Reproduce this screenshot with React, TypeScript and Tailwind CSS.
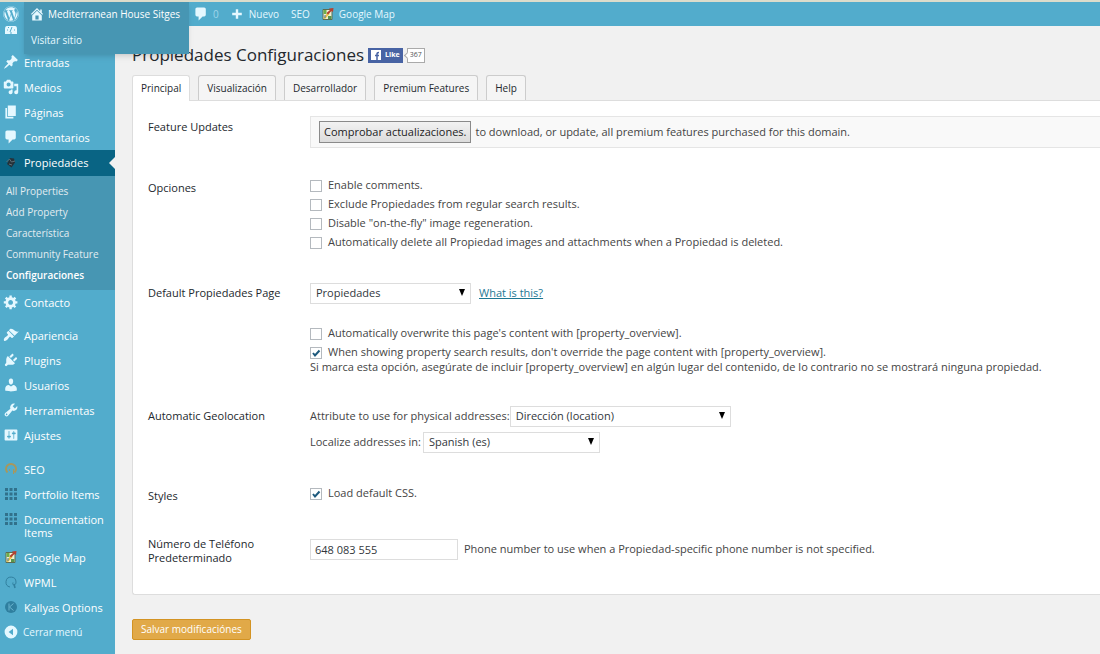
import React, { useState } from "react";
import { FaWordpress } from "react-icons/fa";

const dashicons = {
  pin: "M10.44 3.02l1.82-1.82 6.36 6.35-1.83 1.82c-1.05-.68-2.48-.57-3.41.36l-.75.75c-.92.93-1.04 2.35-.35 3.41l-1.83 1.82-2.41-2.41-2.8 2.79c-.42.42-3.38 2.71-3.8 2.29s1.86-3.39 2.28-3.81l2.79-2.79L4.1 9.36l1.83-1.82c1.05.69 2.48.57 3.4-.36l.75-.75c.93-.92 1.05-2.35.36-3.41z",
  media: "M13 11V4c0-.55-.45-1-1-1h-1.67L9 1H5L3.67 3H2c-.55 0-1 .45-1 1v7c0 .55.45 1 1 1h10c.55 0 1-.45 1-1zM7 4.5c1.38 0 2.5 1.12 2.5 2.5S8.38 9.5 7 9.5 4.5 8.38 4.5 7 5.62 4.5 7 4.5zM14 6h5v10.5c0 1.38-1.12 2.5-2.5 2.5S14 17.88 14 16.5s1.12-2.5 2.5-2.5c.17 0 .34.02.5.05V9h-3V6zm-4 8.05V13h2v3.5c0 1.38-1.12 2.5-2.5 2.5S7 17.88 7 16.5 8.12 14 9.5 14c.17 0 .34.02.5.05z",
  page: "M6 15V2h10v13H6zm-1 1h8v2H3V5h2v11z",
  comments: "M5 2h9c1.1 0 2 .9 2 2v7c0 1.1-.9 2-2 2h-2l-5 5v-5H5c-1.1 0-2-.9-2-2V4c0-1.1.9-2 2-2z",
  gear: "M18 12h-2.18c-.17.7-.44 1.35-.81 1.93l1.54 1.54-2.1 2.1-1.54-1.54c-.58.36-1.23.63-1.91.79V19H8v-2.18c-.68-.16-1.33-.43-1.91-.79l-1.54 1.54-2.12-2.12 1.54-1.54c-.36-.58-.63-1.23-.79-1.91H1V9.03h2.17c.16-.7.44-1.35.8-1.94L2.43 5.55l2.1-2.1 1.54 1.54c.58-.37 1.24-.64 1.93-.81V2h3v2.18c.68.16 1.33.43 1.91.79l1.54-1.54 2.12 2.12-1.54 1.54c.36.59.64 1.24.8 1.94H18V12zm-8.5 1.5c1.66 0 3-1.34 3-3s-1.34-3-3-3-3 1.34-3 3 1.34 3 3 3z",
  appearance: "M14.48 11.06L7.41 3.99l1.5-1.5c.5-.56 2.3-.47 3.51.32 1.21.8 1.43 1.28 2.91 2.1 1.18.64 2.45 1.26 4.45.85zm-.71.71L6.7 4.7 4.93 6.47c-.39.39-.39 1.02 0 1.41l1.06 1.06c.39.39.39 1.03 0 1.42-.6.6-1.43 1.11-2.21 1.69-.35.26-.7.53-1.01.84C1.43 14.23.4 16.08 1.4 17.07c.99 1 2.84-.03 4.18-1.36.31-.31.58-.66.85-1.02.57-.78 1.08-1.61 1.69-2.21.39-.39 1.02-.39 1.41 0l1.06 1.06c.39.39 1.02.39 1.41 0z",
  plugins: "M13.11 4.36L9.87 7.6 8 5.73l3.24-3.24c.35-.34 1.05-.2 1.56.32.52.51.66 1.21.31 1.55zm-8 1.77l.91-1.12 9.01 9.01-1.19.84c-.71.71-2.63 1.16-3.82 1.16H6.14L4.9 17.26c-.59.59-1.54.59-2.12 0-.59-.58-.59-1.53 0-2.12l1.24-1.24v-3.88c0-1.13.4-3.19 1.09-3.89zm7.26 3.97l3.24-3.24c.34-.35 1.04-.21 1.55.31.52.51.66 1.21.31 1.55l-3.24 3.25z",
  users: "M10 9.25c-2.27 0-2.73-3.44-2.73-3.44C7 4.02 7.82 2 9.97 2c2.16 0 2.98 2.02 2.71 3.81 0 0-.41 3.44-2.68 3.44zm0 2.57L12.72 10c2.39 0 4.52 2.33 4.52 4.53v2.49s-3.65 1.13-7.24 1.13c-3.65 0-7.24-1.13-7.24-1.13v-2.49c0-2.25 1.94-4.48 4.47-4.48z",
  tools: "M16.68 9.77c-1.34 1.34-3.3 1.67-4.95.99l-5.41 6.52c-.99.99-2.59.99-3.58 0s-.99-2.59 0-3.57l6.52-5.42c-.68-1.65-.35-3.61.99-4.95 1.28-1.28 3.12-1.62 4.72-1.06l-2.89 2.89 2.82 2.82 2.86-2.87c.53 1.58.18 3.39-1.08 4.65zM3.81 16.21c.4.39 1.04.39 1.43 0 .4-.4.4-1.04 0-1.43-.39-.4-1.03-.4-1.43 0-.39.39-.39 1.03 0 1.43z",
  settings: "M18 16V4c0-.55-.45-1-1-1H3c-.55 0-1 .45-1 1v12c0 .55.45 1 1 1h14c.55 0 1-.45 1-1zM8 11h1c.55 0 1 .45 1 1s-.45 1-1 1H8v1.5c0 .28-.22.5-.5.5s-.5-.22-.5-.5V13H6c-.55 0-1-.45-1-1s.45-1 1-1h1V5.5c0-.28.22-.5.5-.5s.5.22.5.5V11zm5-2h-1c-.55 0-1-.45-1-1s.45-1 1-1h1V5.5c0-.28.22-.5.5-.5s.5.22.5.5V7h1c.55 0 1 .45 1 1s-.45 1-1 1h-1v5.5c0 .28-.22.5-.5.5s-.5-.22-.5-.5V9z",
  home: "M16 8.5l1.53 1.53-1.06 1.06L10 4.6l-6.47 6.49-1.06-1.06L10 2.5l4 4v-2h2v4zm-6-2.46l6 5.99V18H4v-5.97zM12 17v-5H8v5h4z",
  plus: "M8 2h4v6h6v4h-6v6H8v-6H2V8h6z",
  collapse: "M10 2a8 8 0 1 1 0 16 8 8 0 0 1 0-16zM12.500 6L7 10l5.500 4z",
};

const Dashicon = ({ name }: { name: keyof typeof dashicons }) => (
  <svg viewBox="0 0 20 20" className="size-4 shrink-0 fill-[#e5f8ff]" aria-hidden="true">
    <path fillRule="evenodd" d={dashicons[name]} />
  </svg>
);

const GridIcon = () => (
  <svg viewBox="0 0 16 16" className="size-4 shrink-0 fill-[#31718b]" aria-hidden="true">
    {[2, 6.5, 11].map((y) => [2, 6.5, 11].map((x) => <rect key={`${x}-${y}`} x={x} y={y} width="3" height="3" />))}
  </svg>
);

const MapIcon = () => (
  <svg viewBox="0 0 16 16" className="size-4 shrink-0" aria-hidden="true">
    <path d="M3 3.500h9v10H3z" fill="#eef0d6" stroke="#5d6b4f" />
    <path d="M3.500 4h3v4h-3z" fill="#6fae4a" />
    <path d="M4 12.500L9 7" stroke="#e8c33f" strokeWidth="2" />
    <path d="M8 10h3.500v3H8z" fill="#58964c" />
    <path d="M9 2.500l4.500-.5-.5 4-1.500-1L8 8.500 6.500 7 10 4z" fill="#b5412f" />
    <path d="M5 9v3" stroke="#4a78b0" />
  </svg>
);

const PropertyIcon = () => (
  <svg viewBox="0 0 16 16" className="size-4 shrink-0" aria-hidden="true">
    <path d="M7 3l4 .5 1 4-3.500 5L4 9z" fill="#26323a" />
    <path d="M3.500 7l3-3 2 3 3.500-1M6 9l3 1" stroke="#5d7078" fill="none" />
  </svg>
);

const SeoIcon = () => (
  <svg viewBox="0 0 16 16" className="size-4 shrink-0" aria-hidden="true">
    <path d="M4.500 11.500a5 5 0 1 1 7 0" fill="none" stroke="#a8975c" strokeWidth="2" />
    <path d="M6.500 8v2M10.500 8v5" stroke="#a8975c" />
  </svg>
);

const WpmlIcon = () => (
  <svg viewBox="0 0 16 16" className="size-4 shrink-0" aria-hidden="true">
    <path d="M7 13a5 5 0 1 1 6-5c0 2-1 3-2 3s-1.500-1-1-2.500" fill="none" stroke="#31809f" strokeWidth="1" />
    <path d="M11 10l1 4" stroke="#31809f" strokeWidth="1.500" />
  </svg>
);

const KallyasIcon = () => (
  <svg viewBox="0 0 16 16" className="size-4 shrink-0" aria-hidden="true">
    <circle cx="8" cy="8" r="6" fill="#2f7f9f" />
    <path d="M6 4.500v7M10.500 4.500L6.500 8l4 3.500" fill="none" stroke="#6bb5cf" strokeWidth="1" />
  </svg>
);

const submenu = ["All Properties", "Add Property", "Característica", "Community Feature", "Configuraciones"];

type Item = { label: string; icon: React.ReactNode };

const contentMenu: Item[] = [
  { label: "Entradas", icon: <Dashicon name="pin" /> },
  { label: "Medios", icon: <Dashicon name="media" /> },
  { label: "Páginas", icon: <Dashicon name="page" /> },
  { label: "Comentarios", icon: <Dashicon name="comments" /> },
];

const siteMenu: Item[] = [
  { label: "Apariencia", icon: <Dashicon name="appearance" /> },
  { label: "Plugins", icon: <Dashicon name="plugins" /> },
  { label: "Usuarios", icon: <Dashicon name="users" /> },
  { label: "Herramientas", icon: <Dashicon name="tools" /> },
  { label: "Ajustes", icon: <Dashicon name="settings" /> },
];

const extraMenu: Item[] = [
  { label: "SEO", icon: <SeoIcon /> },
  { label: "Portfolio Items", icon: <GridIcon /> },
  { label: "Documentation Items", icon: <GridIcon /> },
  { label: "Google Map", icon: <MapIcon /> },
  { label: "WPML", icon: <WpmlIcon /> },
  { label: "Kallyas Options", icon: <KallyasIcon /> },
];

const MenuItem = ({ label, icon }: Item) => (
  <li>
    <a href="#" className="flex items-start gap-[5px] py-1 pr-1 pl-[3px] text-[11px] leading-[13px] text-white">
      {icon}
      <span className="py-[2px]">{label}</span>
    </a>
  </li>
);

const AdminBar = () => (
  <header className="flex h-[26px] items-center border-t-2 border-[#dcdccb] bg-[#52accc] text-[10px] text-[#e5f8ff]">
    <a href="#" aria-label="WordPress" className="flex w-6 shrink-0 pl-[3px]">
      <FaWordpress className="size-4" />
    </a>
    <div className="relative z-10 h-full w-[165px] shrink-0">
      <div className="absolute inset-x-0 top-0 bg-[#4796b3] pb-1 shadow-md">
        <a href="#" className="flex h-6 items-center gap-[3px] pl-[5px] whitespace-nowrap text-white">
          <Dashicon name="home" />
          Mediterranean House Sitges
        </a>
        <a href="#" className="flex h-6 items-center pt-1 pl-[7px]">Visitar sitio</a>
      </div>
    </div>
    <a href="#" className="ml-1 flex items-center gap-1 text-[#9fd6ea]">
      <Dashicon name="comments" />
      0
    </a>
    <a href="#" className="ml-3 flex items-center gap-[6px]">
      <svg viewBox="0 0 20 20" className="size-3 fill-[#e5f8ff]" aria-hidden="true">
        <path d={dashicons.plus} />
      </svg>
      Nuevo
    </a>
    <a href="#" className="ml-3">SEO</a>
    <a href="#" className="ml-[10px] flex items-center gap-[3px]">
      <MapIcon />
      Google Map
    </a>
  </header>
);

const Sidebar = () => (
  <nav className="w-[115px] shrink-0 bg-[#52accc]">
    <a href="#" aria-label="Escritorio" className="mb-2 flex h-4 pl-[3px]">
      <svg viewBox="0 0 16 10" className="h-[10px] w-4" aria-hidden="true">
        <path d="M4 0h8q2 0 2 3v5H2V3q0-3 2-3z" fill="#e5f8ff" />
        <path d="M4 4h1M5 1l1 1M11 4h1M7 6l2-5M7 7h2" stroke="#52accc" />
      </svg>
    </a>
    <ul>
      {contentMenu.map((item) => (
        <MenuItem key={item.label} {...item} />
      ))}
      <li>
        <a href="#" className="relative flex h-[26px] items-center gap-[5px] bg-[#096484] pl-[3px] text-[11px] text-white">
          <PropertyIcon />
          Propiedades
          <span className="absolute top-[7px] right-0 border-y-6 border-r-6 border-y-transparent border-r-[#f1f1f1]" />
        </a>
        <ul className="bg-[#4796b3] pt-[5px] pb-1">
          {submenu.map((label) => (
            <li key={label}>
              <a
                href="#"
                className={`block pl-[6px] text-[10px] leading-[21px] whitespace-nowrap ${
                  label === "Configuraciones" ? "font-semibold text-white" : "text-[#e2ecf1]"
                }`}
              >
                {label}
              </a>
            </li>
          ))}
        </ul>
      </li>
      <MenuItem label="Contacto" icon={<Dashicon name="gear" />} />
    </ul>
    <ul className="mt-2">
      {siteMenu.map((item) => (
        <MenuItem key={item.label} {...item} />
      ))}
    </ul>
    <ul className="mt-[9px]">
      {extraMenu.map((item) => (
        <MenuItem key={item.label} {...item} />
      ))}
    </ul>
    <button type="button" className="flex h-6 items-center gap-1 pl-[3px] text-[10px] text-[#e5f8ff]">
      <Dashicon name="collapse" />
      Cerrar menú
    </button>
  </nav>
);

const Checkbox = ({ label, defaultChecked = false }: { label: string; defaultChecked?: boolean }) => (
  <label className="flex h-[19px] items-center gap-[6px]">
    <span className="relative flex">
      <input
        type="checkbox"
        defaultChecked={defaultChecked}
        className="peer size-3 appearance-none border border-[#b4b9be] bg-white"
      />
      <svg viewBox="0 0 12 12" className="pointer-events-none absolute inset-0 hidden size-3 peer-checked:block" aria-hidden="true">
        <path d="M3 6l2 2.500L9.500 3.500" fill="none" stroke="#1e5a7d" strokeWidth="2" />
      </svg>
    </span>
    {label}
  </label>
);

const Select = ({ id, label, option, className }: { id: string; label?: string; option: string; className: string }) => (
  <span className={`relative flex ${className}`}>
    <select
      id={id}
      aria-label={label}
      className="h-[21px] w-full appearance-none border border-[#ddd] bg-white pl-[5px] text-[#32373c]"
    >
      <option>{option}</option>
    </select>
    <svg viewBox="0 0 8 7" className="pointer-events-none absolute top-[6px] right-[5px] h-[7px] w-2 fill-black" aria-hidden="true">
      <path d="M1 0h6L4 7z" />
    </svg>
  </span>
);

const Row = ({ title, className, children }: { title: string; className: string; children: React.ReactNode }) => (
  <section className={`grid grid-cols-[162px_1fr] ${className}`}>
    <h2 className="pr-5 text-[11px] leading-[14px] font-medium text-[#23282d]">{title}</h2>
    <div>{children}</div>
  </section>
);

const tabs = ["Principal", "Visualización", "Desarrollador", "Premium Features", "Help"];

const App = () => {
  const [activeTab, setActiveTab] = useState("Principal");

  return (
    <div className="flex min-h-screen flex-col bg-[#f1f1f1] font-['Open_Sans',sans-serif] text-[11px] text-[#444]">
      <AdminBar />
      <div className="flex grow">
        <Sidebar />
        <main className="min-w-0 grow pl-[17px]">
          <div className="flex h-[49px] items-center gap-1 pt-[9px]">
            <h1 className="text-[17px] text-[#23282d]">Propiedades Configuraciones</h1>
            <div className="flex items-center gap-1">
              <button type="button" className="flex h-[15px] items-center gap-1 bg-[#4863a4] px-[3px] text-[7px] font-bold text-white">
                <svg viewBox="0 0 10 10" className="size-[10px]" aria-hidden="true">
                  <path d="M0 0h10v10H0z" fill="#fff" />
                  <path d="M6 10V4q0-1.500 2-1.500M4 5.500h4" fill="none" stroke="#4863a4" strokeWidth="1.500" />
                </svg>
                Like
              </button>
              <span className="relative flex h-[15px] items-center border border-[#aaa] bg-white px-[2px] text-[7px] text-[#555]">
                <span className="absolute top-1 -left-[3px] size-[5px] rotate-45 border-b border-l border-[#aaa] bg-white" />
                367
              </span>
            </div>
          </div>

          <div role="tablist" className="flex gap-2">
            {tabs.map((tab) => (
              <button
                key={tab}
                type="button"
                role="tab"
                aria-selected={activeTab === tab}
                onClick={() => setActiveTab(tab)}
                className={`rounded-t-[3px] border border-b-0 px-2 text-[10px] text-[#23282d] ${
                  activeTab === tab ? "-mb-px h-[26px] border-[#ddd] bg-white" : "h-[25px] border-[#ccc] bg-[#f5f5f5]"
                }`}
              >
                {tab}
              </button>
            ))}
          </div>

          <div className="rounded-bl-[3px] border border-r-0 border-[#ddd] bg-white pt-[15px] pb-[29px] pl-[15px]">
            <Row title="Feature Updates" className="[&>h2]:pt-1">
              <div className="flex h-8 items-center gap-1 border border-r-0 border-[#e5e5e5] bg-[#f9f9f9] pl-2">
                <button
                  type="button"
                  className="h-[22px] border border-[#8a8a8a] bg-linear-to-b from-[#f2f2f2] to-[#dcdcdc] px-1 text-[11px] text-[#222]"
                >
                  Comprobar actualizaciones.
                </button>
                to download, or update, all premium features purchased for this domain.
              </div>
            </Row>

            <Row title="Opciones" className="mt-7 [&>h2]:pt-[5px]">
              <Checkbox label="Enable comments." />
              <Checkbox label="Exclude Propiedades from regular search results." />
              <Checkbox label={'Disable "on-the-fly" image regeneration.'} />
              <Checkbox label="Automatically delete all Propiedad images and attachments when a Propiedad is deleted." />
            </Row>

            <Row title="Default Propiedades Page" className="mt-[31px] [&>h2]:pt-[3px]">
              <div className="mb-5 flex items-center gap-2">
                <Select id="default-page" label="Default Propiedades Page" option="Propiedades" className="w-[161px]" />
                <a href="#" className="text-[#1e7894] underline">What is this?</a>
              </div>
              <Checkbox label="Automatically overwrite this page's content with [property_overview]." />
              <Checkbox
                label="When showing property search results, don't override the page content with [property_overview]."
                defaultChecked
              />
              <p className="leading-[10px]">
                Si marca esta opción, asegúrate de incluir [property_overview] en algún lugar del contenido, de lo contrario no se mostrará ninguna propiedad.
              </p>
            </Row>

            <Row title="Automatic Geolocation" className="mt-[34px] [&>h2]:pt-[3px]">
              <div className="mb-[5px] flex items-center">
                <label htmlFor="address-attribute">Attribute to use for physical addresses:</label>
                <Select id="address-attribute" option="Dirección (location)" className="w-[221px]" />
              </div>
              <div className="flex items-center gap-[2px]">
                <label htmlFor="address-language">Localize addresses in:</label>
                <Select id="address-language" option="Spanish (es)" className="w-[177px]" />
              </div>
            </Row>

            <Row title="Styles" className="mt-[31px] [&>h2]:pt-[5px]">
              <Checkbox label="Load default CSS." defaultChecked />
            </Row>

            <Row title="Número de Teléfono Predeterminado" className="mt-[34px]">
              <div className="flex items-center gap-[6px] pt-[2px]">
                <input
                  id="phone"
                  type="text"
                  aria-label="Número de Teléfono Predeterminado"
                  defaultValue="648 083 555"
                  className="h-[21px] w-[148px] border border-[#ddd] px-1 text-[#32373c]"
                />
                <label htmlFor="phone">
                  Phone number to use when a Propiedad-specific phone number is not specified.
                </label>
              </div>
            </Row>
          </div>

          <button type="submit" className="mt-6 h-[21px] rounded-[2px] border border-[#d39323] bg-[#e1a948] px-2 text-[10px] text-white">
            Salvar modificaciónes
          </button>
        </main>
      </div>
    </div>
  );
};

export default App;
